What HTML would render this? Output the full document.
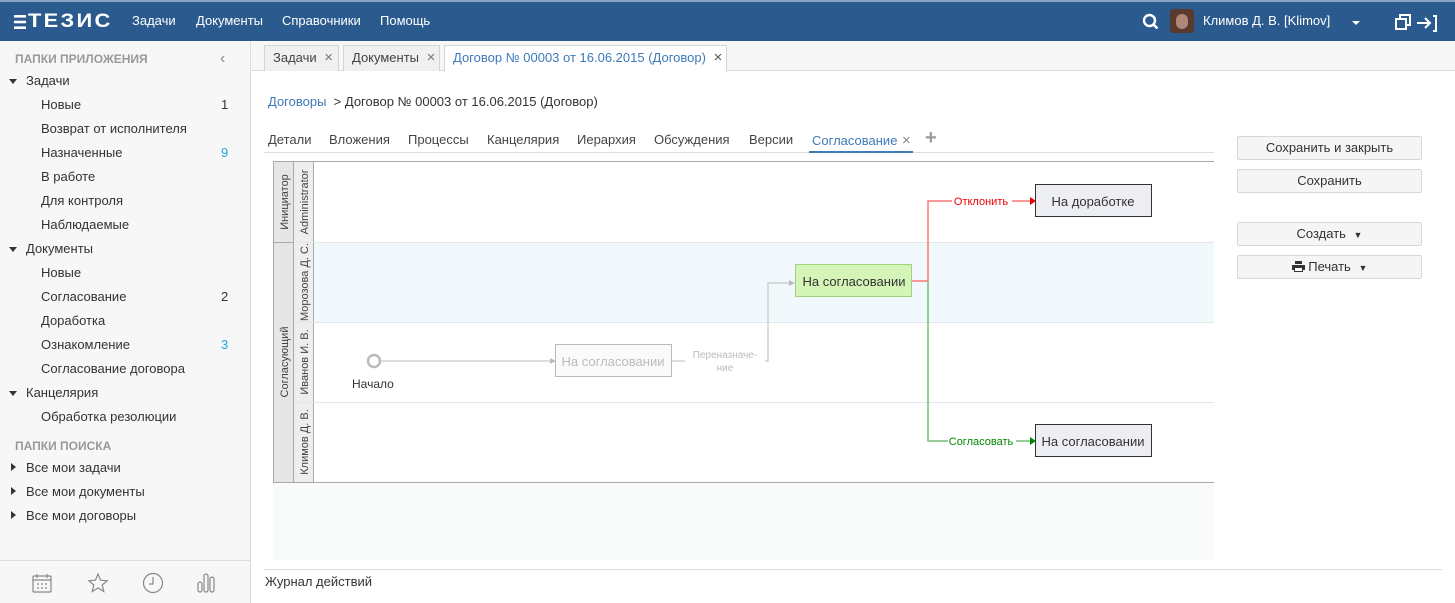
<!DOCTYPE html>
<html><head><meta charset="utf-8"><style>
*{box-sizing:border-box;margin:0;padding:0}
body{width:1455px;height:603px;overflow:hidden;font-family:"Liberation Sans",Arial,sans-serif;font-size:13px;color:#333;background:#fff;position:relative}
.a{position:absolute}
#hdr{left:0;top:0;width:1455px;height:41px;background:#2b5b8e;border-top:2px solid #8aa6c6}
#hdr .m{color:#fff;font-size:13px;top:11px}
#side{left:0;top:41px;width:251px;height:562px;background:#f7f7f7;border-right:1px solid #ddd}
.si{position:absolute;font-size:13px;color:#333}
.cnt{position:absolute;left:221px;font-size:13px}
.tri{position:absolute;width:0;height:0}
.btn{position:absolute;left:1237px;width:185px;height:24px;border:1px solid #d8d8d8;border-radius:2px;background:#f5f5f5;text-align:center;line-height:22px;font-size:13px;color:#333}
.tab{position:absolute;top:45px;height:26px;border:1px solid #d4d4d4;border-bottom:none;background:#f0f0f0;line-height:24px;padding-left:8px;font-size:13px;color:#444}
.st{position:absolute;top:132px;font-size:13px;color:#444}
.x{color:#777;margin-left:4px;font-size:15px}
</style></head><body>
<div id="hdr" class="a">
 <svg class="a" style="left:14px;top:12px" width="102" height="16" fill="#fff"><rect x="0" y="1" width="12" height="2.6"/><rect x="0" y="6.7" width="12" height="2.6"/><rect x="0" y="12.4" width="12" height="2.6"/></svg>
 <div class="a" style="left:28px;top:9px;color:#fff;font-weight:bold;font-size:19px;letter-spacing:2px;transform:scaleX(1.15);transform-origin:left">ТЕЗИС</div>
 <div class="a m" style="left:132px">Задачи</div>
 <div class="a m" style="left:196px">Документы</div>
 <div class="a m" style="left:282px">Справочники</div>
 <div class="a m" style="left:380px">Помощь</div>
 <svg class="a" style="left:1142px;top:11px" width="18" height="18"><circle cx="7.5" cy="7.5" r="5.5" stroke="#fff" stroke-width="2.4" fill="none"/><line x1="11.5" y1="11.5" x2="15.5" y2="15.5" stroke="#fff" stroke-width="2.6"/></svg>
 <div class="a" style="left:1170px;top:7px;width:24px;height:24px;border-radius:3px;background:#5a3a2c"><div style="margin:5px 6px;width:12px;height:15px;border-radius:6px;background:#b08878"></div></div>
 <div class="a m" style="left:1203px">Климов Д. В. [Klimov]</div>
 <div class="tri" style="left:1352px;top:19px;border-left:4px solid transparent;border-right:4px solid transparent;border-top:4px solid #fff"></div>
 <svg class="a" style="left:1395px;top:12px" width="44" height="20"><rect x="1" y="5" width="10" height="10" fill="none" stroke="#fff" stroke-width="2"/><path d="M5 5V1h10v10h-4" fill="none" stroke="#fff" stroke-width="2"/><path d="M22 9h13M30 4l5 5-5 5M38 2h3v15h-3" fill="none" stroke="#fff" stroke-width="2"/></svg>
</div>
<div id="side" class="a">
 <div class="si" style="left:15px;top:11px;color:#999;font-weight:bold;font-size:12px">ПАПКИ ПРИЛОЖЕНИЯ</div>
 <div class="si" style="left:220px;top:9px;color:#888;font-size:16px">‹</div>
 <div class="tri" style="left:9px;top:38px;border-left:4px solid transparent;border-right:4px solid transparent;border-top:5px solid #333"></div>
 <div class="si" style="left:26px;top:32px">Задачи</div>
 <div class="si" style="left:41px;top:56px">Новые</div><div class="cnt" style="top:56px">1</div>
 <div class="si" style="left:41px;top:80px">Возврат от исполнителя</div>
 <div class="si" style="left:41px;top:104px">Назначенные</div><div class="cnt" style="top:104px;color:#1ea7e0">9</div>
 <div class="si" style="left:41px;top:128px">В работе</div>
 <div class="si" style="left:41px;top:152px">Для контроля</div>
 <div class="si" style="left:41px;top:176px">Наблюдаемые</div>
 <div class="tri" style="left:9px;top:206px;border-left:4px solid transparent;border-right:4px solid transparent;border-top:5px solid #333"></div>
 <div class="si" style="left:26px;top:200px">Документы</div>
 <div class="si" style="left:41px;top:224px">Новые</div>
 <div class="si" style="left:41px;top:248px">Согласование</div><div class="cnt" style="top:248px">2</div>
 <div class="si" style="left:41px;top:272px">Доработка</div>
 <div class="si" style="left:41px;top:296px">Ознакомление</div><div class="cnt" style="top:296px;color:#1ea7e0">3</div>
 <div class="si" style="left:41px;top:320px">Согласование договора</div>
 <div class="tri" style="left:9px;top:350px;border-left:4px solid transparent;border-right:4px solid transparent;border-top:5px solid #333"></div>
 <div class="si" style="left:26px;top:344px">Канцелярия</div>
 <div class="si" style="left:41px;top:368px">Обработка резолюции</div>
 <div class="si" style="left:15px;top:398px;color:#999;font-weight:bold;font-size:12px">ПАПКИ ПОИСКА</div>
 <div class="tri" style="left:11px;top:422px;border-top:4px solid transparent;border-bottom:4px solid transparent;border-left:5px solid #333"></div>
 <div class="si" style="left:26px;top:419px">Все мои задачи</div>
 <div class="tri" style="left:11px;top:446px;border-top:4px solid transparent;border-bottom:4px solid transparent;border-left:5px solid #333"></div>
 <div class="si" style="left:26px;top:443px">Все мои документы</div>
 <div class="tri" style="left:11px;top:470px;border-top:4px solid transparent;border-bottom:4px solid transparent;border-left:5px solid #333"></div>
 <div class="si" style="left:26px;top:467px">Все мои договоры</div>
 <div class="a" style="left:0;top:519px;width:250px;border-top:1px solid #ddd"></div>
 <svg class="a" style="left:30px;top:530px" width="200" height="26" fill="none" stroke="#888" stroke-width="1.2">
  <rect x="3" y="5" width="18" height="16" rx="1"/><path d="M7 3v4M17 3v4M3 9h18"/><path d="M7 13h2M11 13h2M15 13h2M7 17h2M11 17h2M15 17h2"/>
  <path d="M68 3l2.6 6.2 6.6.5-5 4.3 1.6 6.5-5.8-3.5-5.8 3.5 1.6-6.5-5-4.3 6.6-.5z"/>
  <circle cx="123" cy="12" r="9.5"/><path d="M123 6v7h-4"/>
  <rect x="168" y="11" width="4" height="10" rx="2"/><rect x="174" y="3" width="4" height="18" rx="2"/><rect x="180" y="6" width="4" height="15" rx="2"/>
 </svg>
</div>
<div class="a" style="left:251px;top:41px;width:1204px;height:30px;background:#f7f7f7;border-bottom:1px solid #ddd"></div>
<div class="tab" style="left:264px;width:75px">Задачи <span class="x">×</span></div>
<div class="tab" style="left:343px;width:97px">Документы <span class="x">×</span></div>
<div class="tab" style="left:444px;width:283px;background:#fff;height:27px;color:#3d7ab8">Договор № 00003 от 16.06.2015 (Договор) <span class="x" style="color:#555">×</span></div>
<div class="a" style="left:268px;top:94px;font-size:13px"><span style="color:#3d7ab8">Договоры</span> &nbsp;&gt; Договор № 00003 от 16.06.2015 (Договор)</div>
<div class="st" style="left:268px">Детали</div>
<div class="st" style="left:329px">Вложения</div>
<div class="st" style="left:408px">Процессы</div>
<div class="st" style="left:487px">Канцелярия</div>
<div class="st" style="left:577px">Иерархия</div>
<div class="st" style="left:654px">Обсуждения</div>
<div class="st" style="left:749px">Версии</div>
<div class="st" style="left:812px;color:#3d7ab8">Согласование <span style="color:#888;margin-left:1px;font-size:15px">×</span></div>
<div class="st" style="left:925px;color:#999;font-size:20px;top:127px;font-weight:bold">+</div>
<div class="a" style="left:264px;top:152px;width:950px;border-top:1px solid #ddd"></div>
<div class="a" style="left:809px;top:151px;width:104px;height:2px;background:#3d7ab8"></div>
<div class="btn" style="top:136px">Сохранить и закрыть</div>
<div class="btn" style="top:169px">Сохранить</div>
<div class="btn" style="top:222px">Создать <span style="font-size:9px;margin-left:4px">▼</span></div>
<div class="btn" style="top:255px"><svg width="13" height="11" style="vertical-align:-1px"><path d="M3 0h7v3H3z M0 4h13v5h-2v2H2V9H0z" fill="#333"/><rect x="3" y="7" width="7" height="3" fill="#fff"/></svg> Печать <span style="font-size:9px;margin-left:4px">▼</span></div>

<svg class="a" style="left:260px;top:155px" width="960" height="410" font-family="Liberation Sans,Arial,sans-serif">
 <rect x="13" y="327" width="941" height="78" fill="#f9fbfb"/>
 <rect x="54" y="87" width="900" height="80" fill="#f2f9fc"/>
 <line x1="13" y1="6.5" x2="954" y2="6.5" stroke="#aaa"/>
 <line x1="13" y1="327.5" x2="954" y2="327.5" stroke="#aaa"/>
 <rect x="13.5" y="6.5" width="20" height="321" fill="#e6e6e6" stroke="#aaa"/>
 <rect x="33.5" y="6.5" width="20" height="321" fill="#eeeeee" stroke="#aaa"/>
 <line x1="13" y1="87.5" x2="34" y2="87.5" stroke="#aaa"/>
 <g stroke="#e2e8ea"><line x1="34" y1="87.5" x2="954" y2="87.5"/><line x1="34" y1="167.5" x2="954" y2="167.5"/><line x1="34" y1="247.5" x2="954" y2="247.5"/></g>
 <g font-size="11" fill="#444" text-anchor="middle">
  <text transform="translate(28,47) rotate(-90)">Инициатор</text>
  <text transform="translate(28,207) rotate(-90)">Согласующий</text>
  <text transform="translate(48,47) rotate(-90)">Administrator</text>
  <text transform="translate(48,127) rotate(-90)">Морозова Д. С.</text>
  <text transform="translate(48,207) rotate(-90)">Иванов И. В.</text>
  <text transform="translate(48,287) rotate(-90)">Климов Д. В.</text>
 </g>
 <circle cx="114" cy="206" r="6" fill="#fff" stroke="#bbb" stroke-width="2.5"/>
 <text x="92" y="233" font-size="12" fill="#333">Начало</text>
 <path d="M120 206H290" stroke="#bbb" fill="none"/><path d="M290 203l6 3-6 3z" fill="#bbb"/>
 <rect x="295.5" y="189.5" width="116" height="32" fill="#fafafa" stroke="#bbb"/>
 <text x="353" y="211" font-size="13" fill="#bbb" text-anchor="middle">На согласовании</text>
 <path d="M412 206h13M505 206h3v-78h25" stroke="#bbb" fill="none"/><path d="M529 125l6 3-6 3z" fill="#bbb"/>
 <text x="465" y="203" font-size="10" fill="#bbb" text-anchor="middle">Переназначе-</text>
 <text x="465" y="216" font-size="10" fill="#bbb" text-anchor="middle">ние</text>
 <rect x="535.5" y="109.5" width="116" height="32" fill="#d5f5b8" stroke="#9fd47c"/>
 <text x="594" y="131" font-size="13" fill="#333" text-anchor="middle">На согласовании</text>
 <path d="M652 126h16V46h102" stroke="#f77" stroke-width="1.5" fill="none"/><path d="M770 42l6 4-6 4z" fill="#e00"/>
 <rect x="692" y="39" width="60" height="14" fill="#fff"/>
 <text x="721" y="50" font-size="11" fill="#e00" text-anchor="middle">Отклонить</text>
 <path d="M668 126v160h102" stroke="#7b7" stroke-width="1.5" fill="none"/><path d="M770 282l6 4-6 4z" fill="#080"/>
 <rect x="688" y="279" width="68" height="14" fill="#fff"/>
 <text x="721" y="290" font-size="11" fill="#080" text-anchor="middle">Согласовать</text>
 <rect x="775.5" y="29.5" width="116" height="32" fill="#eceef3" stroke="#333"/>
 <text x="833" y="51" font-size="13" fill="#333" text-anchor="middle">На доработке</text>
 <rect x="775.5" y="269.5" width="116" height="32" fill="#eceef3" stroke="#333"/>
 <text x="833" y="291" font-size="13" fill="#333" text-anchor="middle">На согласовании</text>
</svg>
<div class="a" style="left:264px;top:569px;width:1178px;border-top:1px solid #ddd"></div>
<div class="a" style="left:265px;top:574px;font-size:13px">Журнал действий</div>
</body></html>
